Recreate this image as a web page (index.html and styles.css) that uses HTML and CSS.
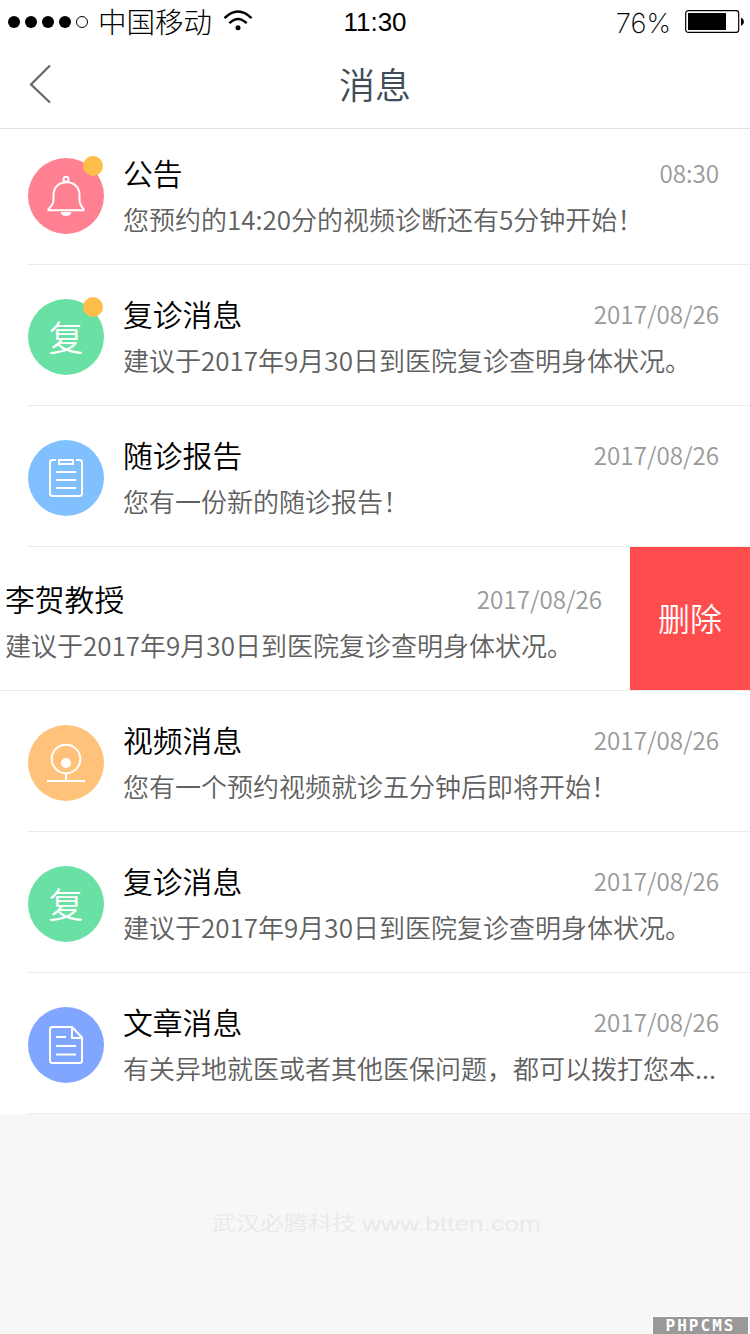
FILE: index.html
```html
<!DOCTYPE html>
<html lang="zh-CN">
<head>
  <meta charset="UTF-8" />
  <meta name="viewport" content="width=device-width, initial-scale=1.0" />
  <title>消息</title>
  <link rel="stylesheet" href="styles.css">
</head>
<body>

  <div class="status">
    <div class="signal"><i></i><i></i><i></i><i></i><i class="empty"></i></div>
    <span class="carrier">中国移动</span>
    <svg class="wifi" width="30" height="22" viewBox="0 0 30 22" fill="none" stroke="#000" stroke-width="2.4">
      <path d="M1.5 8.2Q15 -5 28.5 8.2"/>
      <path d="M6.3 13.2Q15 4.6 23.7 13.2"/>
      <circle cx="15" cy="17.8" r="2.5" fill="#000" stroke="none"/>
    </svg>
    <span class="time">11:30</span>
    <span class="percent">76%</span>
    <svg class="battery" width="60" height="24" viewBox="0 0 60 24">
      <rect x=".7" y=".7" width="53" height="21.6" rx="2.5" fill="none" stroke="#000" stroke-width="1.2"/>
      <rect x="3" y="3" width="38" height="17"/>
      <path d="M56 7.5Q59 9 59 11.8T56 16Z"/>
    </svg>
  </div>

  <div class="header">
    <svg class="back" width="24" height="40" viewBox="0 0 24 40" fill="none" stroke="#666" stroke-width="2.2">
      <path d="M22 1.5L3 20.5L22 38.5"/>
    </svg>
    <h1>消息</h1>
  </div>

  <div class="list">
    <div class="item first">
      <div class="avatar pink">
        <svg width="76" height="76" viewBox="0 0 76 76" fill="none" stroke="#fff" stroke-width="2">
          <circle cx="38" cy="21.3" r="2.5"/>
          <path d="M25.500 37C25.500 29 31 24.300 38.500 24.300S51.500 29 51.500 37V42Q51.500 46.500 55.500 51V52.300H20.500V51Q25.500 46.500 25.500 42Z"/>
          <path d="M32.500 54H43.500Q42.500 58 38 58T32.500 54Z" fill="#fff" stroke="none"/>
        </svg>
        <span class="dot"></span>
      </div>
      <div class="content">
        <div class="top"><h2>公告</h2><span class="date">08:30</span></div>
        <p>您预约的14:20分的视频诊断还有5分钟开始！</p>
      </div>
    </div>

    <div class="item">
      <div class="avatar green">复<span class="dot"></span></div>
      <div class="content">
        <div class="top"><h2>复诊消息</h2><span class="date">2017/08/26</span></div>
        <p>建议于2017年9月30日到医院复诊查明身体状况。</p>
      </div>
    </div>

    <div class="item">
      <div class="avatar sky">
        <svg width="76" height="76" viewBox="0 0 76 76" fill="none" stroke="#fff" stroke-width="2">
          <path d="M28 20H24.500Q22 20 22 22.500V53.500Q22 56 24.500 56H51.500Q54 56 54 53.500V22.500Q54 20 51.500 20H48"/>
          <rect x="31" y="20" width="14" height="4"/>
          <path d="M28 32H48M28 40H48M28 48H48"/>
        </svg>
      </div>
      <div class="content">
        <div class="top"><h2>随诊报告</h2><span class="date">2017/08/26</span></div>
        <p>您有一份新的随诊报告！</p>
      </div>
    </div>

    <div class="item swiped">
      <div class="content">
        <div class="top"><h2>李贺教授</h2><span class="date">2017/08/26</span></div>
        <p>建议于2017年9月30日到医院复诊查明身体状况。</p>
      </div>
      <div class="delete">删除</div>
    </div>

    <div class="item">
      <div class="avatar orange">
        <svg width="76" height="76" viewBox="0 0 76 76" fill="none" stroke="#fff" stroke-width="2">
          <circle cx="38" cy="34" r="14.300"/>
          <circle cx="38" cy="38" r="5" fill="#fff" stroke="none"/>
          <path d="M38 48V56M19 56H57"/>
        </svg>
      </div>
      <div class="content">
        <div class="top"><h2>视频消息</h2><span class="date">2017/08/26</span></div>
        <p>您有一个预约视频就诊五分钟后即将开始！</p>
      </div>
    </div>

    <div class="item">
      <div class="avatar green">复</div>
      <div class="content">
        <div class="top"><h2>复诊消息</h2><span class="date">2017/08/26</span></div>
        <p>建议于2017年9月30日到医院复诊查明身体状况。</p>
      </div>
    </div>

    <div class="item">
      <div class="avatar blue">
        <svg width="76" height="76" viewBox="0 0 76 76" fill="none" stroke="#fff" stroke-width="2" stroke-linejoin="round">
          <path d="M44 20H24.500Q22 20 22 22.500V53.500Q22 56 24.500 56H51.500Q54 56 54 53.500V30.500L44 20V31H54"/>
          <path d="M28 30H38M28 39H48M28 47.500H48"/>
        </svg>
      </div>
      <div class="content">
        <div class="top"><h2>文章消息</h2><span class="date">2017/08/26</span></div>
        <p>有关异地就医或者其他医保问题，都可以拨打您本...</p>
      </div>
    </div>
  </div>

  <div class="footer">
    <svg class="company" width="332" height="30" viewBox="0 0 332 30">
      <text x="3" y="22" textLength="144" lengthAdjust="spacingAndGlyphs">武汉必腾科技</text>
      <text x="153" y="22" textLength="179" lengthAdjust="spacingAndGlyphs">www.btten.com</text>
    </svg>
    <div class="cms">PHPCMS</div>
  </div>

</body>
</html>
```
FILE: styles.css
```css
* {
  box-sizing: border-box;
}
body {
  margin: 0;
  height: 1334px;
  display: flex;
  flex-direction: column;
  background: #f7f7f7;
  font-family: "Noto Sans CJK SC", sans-serif;
  font-weight: 350;
  overflow: hidden;
}
h1, h2, p {
  margin: 0;
  font-weight: 350;
}
.status {
  position: relative;
  display: flex;
  align-items: center;
  height: 44px;
  padding: 0 5px 0 8px;
  background: #fff;
  color: #000;
}
.signal {
  display: flex;
  gap: 5px;
  width: 90px;
}
.signal i {
  width: 12px;
  height: 12px;
  border-radius: 50%;
  background: #000;
}
.signal .empty {
  background: #fff;
  border: 1px solid #000;
}
.carrier {
  font-size: 28.500px;
  font-weight: 300;
  line-height: 42px;
  margin-top: -2px;
}
.wifi {
  margin: -2px 0 0 11px;
}
.time {
  position: absolute;
  left: 0;
  width: 750px;
  text-align: center;
  font: 26px/46px "Liberation Sans", sans-serif;
}
.percent {
  margin: 2px 14px 0 auto;
  font: 200 27.500px/48px Inter, sans-serif;
}
.battery {
  width: 60px;
}
.header {
  position: relative;
  height: 85px;
  background: #fff;
  border-bottom: 1px solid #e1e1e1;
}
.back {
  position: absolute;
  left: 28px;
  top: 20px;
}
.header h1 {
  font-size: 36px;
  line-height: 78px;
  text-align: center;
  color: #3c4c58;
}
.list {
  background: #fff;
}
.item {
  position: relative;
  display: flex;
  height: 141px;
  margin-left: 28px;
  padding: 34px 31px 0 0;
  border-bottom: 1px solid #ebebeb;
}
.item.first {
  height: 136px;
  padding-top: 29px;
}
.avatar {
  position: relative;
  width: 76px;
  height: 76px;
  margin-right: 19px;
  border-radius: 50%;
  color: #fff;
  font-size: 35px;
  line-height: 74px;
  text-align: center;
}
.pink { background: #ff8090; }
.green { background: #6ae1a4; }
.sky { background: #80c0ff; }
.orange { background: #ffc27a; }
.blue { background: #80a6ff; }
.dot {
  position: absolute;
  right: 1px;
  top: -2px;
  width: 20px;
  height: 20px;
  border-radius: 50%;
  background: #ffbe4a;
}
.content {
  flex: 1;
}
.top {
  display: flex;
  justify-content: space-between;
}
.top h2 {
  font-size: 29.800px;
  line-height: 28px;
  color: #000;
}
.date {
  font-size: 24.200px;
  line-height: 30px;
  color: #999;
}
.content p {
  margin-top: 13px;
  font-size: 26px;
  line-height: 35px;
  color: #606060;
  white-space: nowrap;
}
.item.swiped {
  height: 144px;
  margin-left: 0;
  padding: 0 0 0 5px;
}
.swiped .content {
  padding: 37px 28px 0 0;
}
.delete {
  width: 120px;
  background: #ff4c4c;
  color: #fff;
  font-size: 32px;
  line-height: 140px;
  text-align: center;
}
.footer {
  flex: 1;
  position: relative;
  text-align: center;
}
.company {
  margin-top: 95px;
}
.company text {
  font-family: "Liberation Sans", "Noto Sans CJK SC", sans-serif;
  font-size: 20px;
  fill: #e9e9e9;
}
.cms {
  position: absolute;
  right: 1px;
  bottom: 0;
  width: 97px;
  height: 18px;
  border: 1px solid #fff;
  border-bottom: none;
  background: #999;
  color: #fff;
  font: bold 16px/17px "DejaVu Sans Mono", monospace;
  letter-spacing: 2px;
}
```
